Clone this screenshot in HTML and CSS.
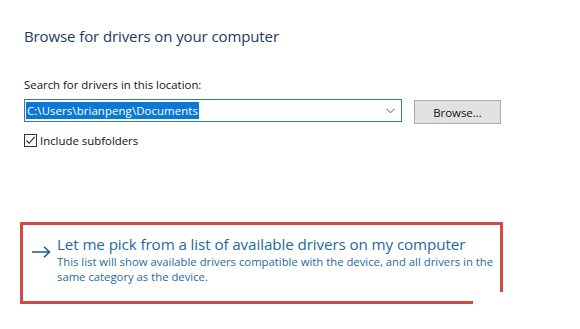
FILE: index.html
```html
<!DOCTYPE html>
<html lang="en">
<head>
    <meta charset="UTF-8">
    <title>Browse for drivers on your computer</title>
    <link rel="stylesheet" href="styles.css">
</head>
<body>
    <div class="wizard">
        <h1 class="title">Browse for drivers on your computer</h1>

        <label class="field-label" for="location">Search for drivers in this location:</label>
        <div class="search-row">
            <div class="combo">
                <span class="combo-value">C:\Users\brianpeng\Documents</span>
                <svg class="combo-chevron" width="9" height="6" viewBox="0 0 9 6">
                    <path d="M0.5 0.8 L4.5 4.8 L8.5 0.8" fill="none" stroke="#555" stroke-width="1"/>
                </svg>
            </div>
            <button class="browse-btn">Browse...</button>
        </div>

        <div class="check-row">
            <span class="checkbox">
                <svg width="11" height="11" viewBox="0 0 11 11">
                    <path d="M1.5 5.5 L4.2 8.3 L9.6 1.8" fill="none" stroke="#222" stroke-width="1.1"/>
                </svg>
            </span>
            <span>Include subfolders</span>
        </div>

        <div class="pick-box">
            <div class="pick-link">
                <span class="arrow">
                    <svg width="19" height="12" viewBox="0 0 19 12">
                        <path d="M0 6 H17.5 M12 0.8 L17.5 6 L12 11.2" fill="none" stroke="#1d5a8c" stroke-width="1.5"/>
                    </svg>
                </span>
                <div class="pick-text">
                    <div class="pick-title">Let me pick from a list of available drivers on my computer</div>
                    <p class="pick-desc">This list will show available drivers compatible with the device, and all drivers in the same category as the device.</p>
                </div>
            </div>
            <!-- 截图时右下角被裁掉的那一块 -->
            <div class="corner-cut"></div>
        </div>
    </div>
</body>
</html>
```

FILE: styles.css
```css
/* 全局样式 */
* {
    margin: 0;
    padding: 0;
    box-sizing: border-box;
}

body {
    font-family: 'Open Sans', 'Noto Sans', sans-serif;
    background: #fff;
    color: #000;
    width: 580px;
    height: 329px;
    overflow: hidden;
}

.wizard {
    padding: 26px 0 0 24px;
}

.title {
    font-size: 15px;
    font-weight: normal;
    color: #1e3a5c;
    line-height: 20px;
    letter-spacing: -0.1px;
}

.field-label {
    display: block;
    margin-top: 31px;
    font-size: 11.4px;
    line-height: 16px;
    color: #111;
}

/* 路径下拉框 + 浏览按钮 */
.search-row {
    display: flex;
    align-items: flex-start;
    margin-top: 6px;
}

.combo {
    width: 378px;
    height: 23px;
    border: 1px solid #2a7ab0;
    display: flex;
    align-items: center;
    justify-content: space-between;
    padding: 0 6px 0 1px;
}

.combo-value {
    background: #0a78d4;
    color: #fff;
    font-size: 11.4px;
    line-height: 17px;
    padding: 0 1px;
    letter-spacing: 0.1px;
}

.browse-btn {
    margin: 1px 0 0 12px;
    width: 87px;
    height: 24px;
    background: #e1e1e1;
    border: 1px solid #adadad;
    font-family: inherit;
    font-size: 11.4px;
    color: #111;
}

.check-row {
    display: flex;
    align-items: center;
    margin-top: 9px;
    font-size: 11.4px;
    color: #111;
}

.checkbox {
    width: 13px;
    height: 13px;
    border: 1px solid #333;
    display: flex;
    align-items: center;
    justify-content: center;
    margin-right: 3px;
}

/* 红框里的链接 */
.pick-box {
    position: relative;
    margin: 74px 0 0 -4px;
    width: 483px;
    height: 82px;
    border: 3px solid #d04848;
}

.pick-link {
    display: flex;
    padding: 10px 0 0 9px;
}

.arrow {
    padding-top: 6px;
    margin-right: 6px;
}

.pick-text {
    flex: 1;
}

.pick-title {
    font-size: 15.2px;
    line-height: 19px;
    color: #1e6a9e;
    letter-spacing: -0.1px;
}

.pick-desc {
    font-size: 11.3px;
    line-height: 15px;
    color: #1e6a9e;
}

.corner-cut {
    position: absolute;
    right: -4px;
    bottom: -4px;
    width: 31px;
    height: 13px;
    background: #fff;
}
```
